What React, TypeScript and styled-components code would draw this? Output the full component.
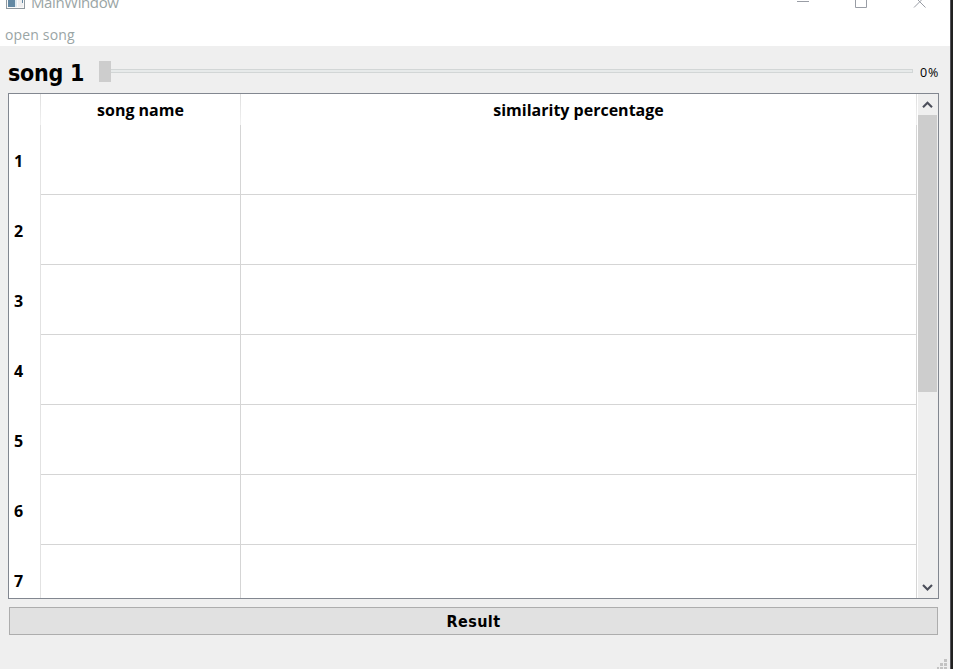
import React from "react";
import styled, { createGlobalStyle } from "styled-components";

const GlobalStyle = createGlobalStyle`
  * { box-sizing: border-box; }
  body { margin: 0; overflow: hidden; }
`;

const Desktop = styled.div`
  width: 953px;
  height: 669px;
  overflow: hidden;
  display: flex;
  background: #202020;
  font-family: "Open Sans", "Noto Sans", sans-serif;
  color: #000;
`;

const Window = styled.div`
  width: 950px;
  height: 669px;
  display: flex;
  flex-direction: column;
  background: #efefef;
`;

const WindowEdge = styled.div`
  width: 1px;
  background: #55555a;
`;

const TitleBar = styled.header`
  height: 23px;
  display: flex;
  align-items: flex-start;
  justify-content: space-between;
  background: #fff;
`;

const TitleGroup = styled.div`
  display: flex;
  padding-left: 6px;
  gap: 6px;
`;

const Title = styled.span`
  font-size: 15px;
  line-height: 20px;
  margin-top: -8px;
  letter-spacing: -0.4px;
  color: #9aa5a5;
`;

const MenuBar = styled.nav`
  height: 23px;
  padding-left: 5px;
  background: #fff;
`;

const MenuItem = styled.span`
  display: block;
  font-size: 14px;
  line-height: 23px;
  letter-spacing: 0.15px;
  color: #9aa5a5;
`;

const SliderRow = styled.div`
  height: 47px;
  display: flex;
  align-items: flex-start;
  padding-left: 8px;
`;

const SongLabel = styled.label`
  width: 91px;
  font-family: "DejaVu Sans Condensed", "DejaVu Sans", sans-serif;
  font-stretch: condensed;
  font-size: 23px;
  font-weight: 700;
  line-height: 30px;
  margin-top: 12px;
  letter-spacing: -0.25px;
  white-space: nowrap;
`;

const Handle = styled.div`
  width: 12px;
  height: 21px;
  margin-top: 15px;
  background: #cdcdcd;
`;

const Groove = styled.div`
  width: 802px;
  height: 4px;
  margin-top: 23px;
  border: 1px solid #d2d6d6;
  border-left: 0;
  background: #e7eaea;
`;

const Percent = styled.span`
  margin: 17px 0 0 7px;
  font-size: 12.5px;
  line-height: 20px;
  letter-spacing: 0.8px;
`;

const TableFrame = styled.div`
  width: 931px;
  height: 506px;
  margin-left: 8px;
  display: flex;
  border: 1px solid #828790;
  background: #fff;
`;

const Table = styled.div`
  width: 908px;
  height: 504px;
  overflow: hidden;
`;

const Row = styled.div<{ $height: number }>`
  display: grid;
  grid-template-columns: 32px 200px 676px;
  height: ${(p) => p.$height}px;
`;

const HeaderCell = styled.div`
  border-right: 1px solid;
  border-image: linear-gradient(#dedede, #f2f2f2) 1;
  font-size: 16px;
  font-weight: 700;
  line-height: 32px;
  text-align: center;
`;

const RowNumber = styled.div`
  height: 70px;
  border-right: 1px solid #e2e2e2;
  padding: 1px 0 0 5px;
  font-size: 16px;
  font-weight: 700;
  line-height: 70px;
`;

const Cell = styled.div`
  height: 70px;
  border-right: 1px solid #d5d5d5;
  border-bottom: 1px solid #d5d5d5;
`;

const ScrollBar = styled.div`
  width: 21px;
  display: flex;
  flex-direction: column;
  border-left: 1px solid #fff;
  background: #efefef;
`;

const ArrowButton = styled.div`
  height: 21px;
  flex: none;
  svg { display: block; }
`;

const Track = styled.div`
  flex: 1;
`;

const Thumb = styled.div`
  width: 19px;
  height: 277px;
  background: #cdcdcd;
`;

const ResultButton = styled.button`
  width: 929px;
  height: 28px;
  flex: none;
  margin: 8px 0 0 9px;
  padding: 2px 0 0;
  border: 1px solid #adadad;
  background: #e1e1e1;
  color: #000;
  font-family: "DejaVu Sans Condensed", "DejaVu Sans", sans-serif;
  font-stretch: condensed;
  font-size: 16px;
  font-weight: 700;
  line-height: 24px;
  letter-spacing: 0.4px;
`;

const StatusBar = styled.footer`
  flex: 1;
  display: flex;
  justify-content: flex-end;
  align-items: flex-end;
  padding-right: 3px;
`;

const rows = [1, 2, 3, 4, 5, 6, 7];

function AppIcon() {
  return (
    <svg width="19" height="10" viewBox="0 0 19 10" shapeRendering="crispEdges">
      <path d="M0 0H19V9H0Z" fill="#8f989f" />
      <path d="M1 0H18V8H1Z" fill="#fafafa" />
      <path d="M2 0H9V7H2Z" fill="#6288a3" />
      <path d="M9 0H11V7H9Z" fill="#dce7ee" />
      <path d="M12 0H17V7H12Z" fill="#eeeeef" />
      <path d="M16 0H17V3H16Z" fill="#6288a3" />
    </svg>
  );
}

function WindowControls() {
  return (
    <svg width="153" height="12" viewBox="0 0 153 12" fill="none" stroke="#999da5">
      <path d="M0 1.5H12M58.5 -1V7.5H69.5V-1" />
      <path d="M117 -4L128.5 7.5M128.5 -4L117 7.5" />
    </svg>
  );
}

function Arrow({ down = false }: { down?: boolean }) {
  return (
    <ArrowButton>
      <svg width="19" height="21" viewBox="0 0 19 21" fill="none" stroke="#4b4e5a" strokeWidth="2.1">
        <path d={down ? "M5 8L9.5 12.5L14 8" : "M5 13.3L9.5 8.8L14 13.3"} />
      </svg>
    </ArrowButton>
  );
}

function SizeGrip() {
  return (
    <svg width="10" height="10" viewBox="0 0 10 10" fill="#c3c3c3" shapeRendering="crispEdges">
      <path d="M7 0h3v3h-3zM3 4h3v3h-3zM7 4h3v3h-3zM0 8h2v2h-2zM3 8h3v2h-3zM7 8h3v2h-3z" />
    </svg>
  );
}

export default function App() {
  return (
    <>
      <GlobalStyle />
      <Desktop>
        <Window>
          <TitleBar>
            <TitleGroup>
              <AppIcon />
              <Title>MainWindow</Title>
            </TitleGroup>
            <WindowControls />
          </TitleBar>
          <MenuBar>
            <MenuItem>open song</MenuItem>
          </MenuBar>
          <SliderRow>
            <SongLabel>song 1</SongLabel>
            <Handle />
            <Groove />
            <Percent>0%</Percent>
          </SliderRow>
          <TableFrame>
            <Table>
              <Row $height={31}>
                <HeaderCell />
                <HeaderCell>song name</HeaderCell>
                <HeaderCell>similarity percentage</HeaderCell>
              </Row>
              {rows.map((n) => (
                <Row key={n} $height={70}>
                  <RowNumber>{n}</RowNumber>
                  <Cell />
                  <Cell />
                </Row>
              ))}
            </Table>
            <ScrollBar>
              <Arrow />
              <Track>
                <Thumb />
              </Track>
              <Arrow down />
            </ScrollBar>
          </TableFrame>
          <ResultButton>Result</ResultButton>
          <StatusBar>
            <SizeGrip />
          </StatusBar>
        </Window>
        <WindowEdge />
      </Desktop>
    </>
  );
}
